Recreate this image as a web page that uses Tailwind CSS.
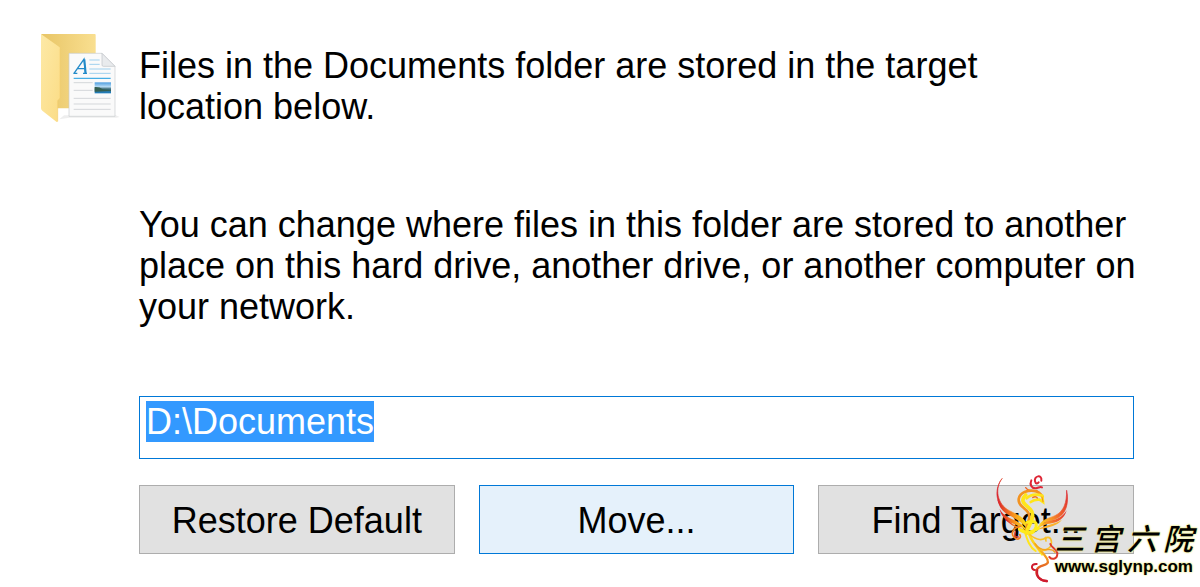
<!DOCTYPE html>
<html lang="en">

<head>
    <meta charset="UTF-8">
    <meta name="viewport" content="width=device-width, initial-scale=1.0">
    <script src="https://cdn.jsdelivr.net/npm/@tailwindcss/browser@4"></script>
    <title>Documents Properties</title>
</head>

<body class="relative min-h-screen bg-white font-['Liberation_Sans',Arial,sans-serif] text-4xl/[41px] text-black">
    <main class="flex items-start gap-4 pt-7 pr-[66px] pb-8 pl-9">
        <!-- Documents folder icon -->
        <svg class="w-[87px] h-[100px] shrink-0" viewBox="18 24 261 300" aria-hidden="true">
            <defs>
                <linearGradient id="folderFront" x1="0" x2="1" y1="0" y2="1">
                    <stop offset="0" stop-color="#fde9a6" />
                    <stop offset="1" stop-color="#fbdc85" />
                </linearGradient>
                <linearGradient id="folderBack" x1="0" x2="1">
                    <stop offset="0" stop-color="#e8c566" />
                    <stop offset="1" stop-color="#f9df90" />
                </linearGradient>
                <linearGradient id="photo" x1="0" x2="0" y1="0" y2="1">
                    <stop offset="0" stop-color="#4d9de0" />
                    <stop offset=".4" stop-color="#b7dcf5" />
                    <stop offset=".6" stop-color="#3e6d78" />
                    <stop offset="1" stop-color="#1c7fc4" />
                </linearGradient>
            </defs>
            <path d="M88 298l14-12h155l12 5-10 2H118z" fill="#eee" />
            <path d="M34 42h160q3 0 3 3v220H62L34 50z" fill="url(#folderBack)" />
            <path d="M34 43l53 37q3 2 3 6v148l-7 8v62q0 4-4 1l-42-33q-4-3-4-7V44z" fill="url(#folderFront)" />
            <path d="M90 86v148l-7 8v62" fill="none" stroke="#f4cf70" stroke-width="2" />
            <path d="M117 100h99l39 39v150H117z" fill="#fafafa" stroke="#c9cccf" stroke-width="2" />
            <path d="M216 100v35q0 4 4 4h35z" fill="#e9ebed" stroke="#bfc3c7" stroke-width="2" />
            <g fill="none">
                <path d="M132 160l30-43 4 43M142 146h22M130 160h12M159 160h12" stroke="#238bc9" stroke-width="4" />
                <path d="M163 118l4 42" stroke="#238bc9" stroke-width="6" />
                <path d="M178 120h31M178 133h31M178 147h64M178 160h64" stroke="#9fd0ee" stroke-width="3" />
                <path d="M131 175h111" stroke="#46aee5" stroke-width="4" />
                <path d="M131 188h57M131 211h57M131 235h111M131 252h111M131 268h111" stroke="#d4d7da" stroke-width="3" />
            </g>
            <path d="M194 187h49v33h-49z" fill="url(#photo)" />
            <path d="M194 201q15-1 24 7l25 2v2l-49 3z" fill="#345f51" />
        </svg>

        <div class="flex-1 pt-[17px]">
            <p class="max-w-[900px]">Files in the Documents folder are stored in the target location below.</p>
            <p class="mt-[77px] -mr-4">You can change where files in this folder are stored to another place on this hard drive, another drive, or another computer on your network.</p>

            <form class="mt-[69px]">
                <input id="target" type="text" aria-label="Target location" value="D:\Documents" autofocus
                    class="block w-full border border-[#0078d7] bg-white px-1.5 pt-1 pb-4 outline-none selection:bg-[#3399ff] selection:text-white" />
                <div class="mt-[26px] grid grid-cols-3 gap-6">
                    <button type="button" class="h-[69px] border border-[#adadad] bg-[#e1e1e1] pt-0.5 whitespace-nowrap">Restore Default</button>
                    <button type="button" class="h-[69px] border border-[#0078d7] bg-[#e5f1fb] pt-0.5 whitespace-nowrap">Move...</button>
                    <button type="button" class="h-[69px] border border-[#adadad] bg-[#e1e1e1] pt-0.5 whitespace-nowrap">Find Target...</button>
                </div>
            </form>
        </div>
    </main>

    <!-- Site watermark -->
    <div class="pointer-events-none absolute right-[7px] bottom-0 flex items-end">
        <svg class="-mr-[22px] h-[120px] w-[90px]" viewBox="0 0 270 360" fill="none" stroke-linecap="round" aria-hidden="true">
            <defs>
                <linearGradient id="flame" x1="0" x2="1">
                    <stop offset="0" stop-color="#d91f2c" />
                    <stop offset=".5" stop-color="#f58a1f" />
                    <stop offset="1" stop-color="#ffe81a" />
                </linearGradient>
                <linearGradient id="flameRight" x1="1" x2="0" y1="0" y2="1">
                    <stop offset="0" stop-color="#dc2430" />
                    <stop offset=".5" stop-color="#f16a2c" />
                    <stop offset="1" stop-color="#ffe81a" />
                </linearGradient>
                <linearGradient id="tail" x1="0" x2="0" y1="0" y2="1">
                    <stop offset="0" stop-color="#ffe91c" />
                    <stop offset=".5" stop-color="#f59a20" />
                    <stop offset="1" stop-color="#c9102a" />
                </linearGradient>
            </defs>
            <!-- left wing -->
            <path d="M45 35C22 63 30 112 67 131C91 144 111 149 121 178C104 154 84 148 65 138C22 115 22 62 45 35z" fill="url(#flame)" stroke="url(#flame)" stroke-width="2" />
            <path d="M31 97C43 119 62 133 91 147C108 156 116 166 121 185C104 164 87 157 72 148C49 137 35 121 31 97z" fill="url(#flame)" />
            <path d="M38 126C49 145 67 154 87 161C102 168 112 178 119 190C101 179 87 174 73 168C55 160 42 147 38 126z" fill="url(#flame)" />
            <path d="M57 158Q85 183 115 190" stroke="url(#flame)" stroke-width="4" />
            <!-- right wing -->
            <path d="M239 71C247 108 237 143 208 155C188 163 165 165 153 181C165 155 188 154 204 146C231 133 239 107 239 71z" fill="url(#flameRight)" stroke="url(#flameRight)" stroke-width="2" />
            <path d="M239 130C232 155 213 166 194 169C177 172 161 176 151 188C160 168 179 164 195 160C215 156 229 147 239 130z" fill="url(#flameRight)" />
            <path d="M225 158C211 176 191 180 151 188C174 173 201 173 225 158z" fill="#fbb02a" />
            <!-- crest -->
            <path d="M163 41C166 21 140 26 144 43C146 52 152 51 155 46M133 40C127 53 134 65 146 64C155 63 159 58 165 61" stroke="#de2535" stroke-width="6" />
            <path d="M116 62C122 71 136 75 150 70" stroke="#ef6327" stroke-width="4" />
            <!-- head and neck -->
            <path d="M166 89C154 67 128 69 113 75C92 84 89 105 106 119C119 130 132 139 125 159C122 174 114 187 119 199" stroke="#f39321" stroke-width="8" />
            <path d="M116 84C99 100 111 111 124 121C143 136 137 153 131 167L121 188" stroke="#ffe619" stroke-width="11" />
            <path d="M119 94Q137 77 166 86L168 105L158 98Q143 96 131 105" stroke="#ffe519" stroke-width="8" />
            <path d="M137 92q9-6 14 1" stroke="#ee7224" stroke-width="4" />
            <path d="M165 90l3 14" stroke="#f58b20" stroke-width="3" />
            <!-- body -->
            <path d="M120 166Q153 157 147 180Q139 204 120 198M97 187Q121 207 154 184" stroke="#ffeb19" stroke-width="9" />
            <path d="M101 178C78 181 69 202 83 212C94 222 105 211 98 203" stroke="#f4811f" stroke-width="5" />
            <path d="M85 194q-6 17 9 16" stroke="#df392c" stroke-width="4" />
            <path d="M114 196C121 220 128 241 146 252M122 194C137 226 149 243 165 263" stroke="#ffe51b" stroke-width="6" />
            <!-- tail -->
            <path d="M127 203C136 235 175 257 182 280C188 298 155 291 149 309C145 326 158 341 179 342" stroke="url(#tail)" stroke-width="7" />
            <path d="M149 291C130 290 132 309 144 309M151 309C147 329 160 342 180 343" stroke="#cf1c2e" stroke-width="6" />
            <path d="M128 203C151 222 169 220 177 211M158 248C173 254 197 244 193 222C190 206 172 209 177 222" stroke="#fac02a" stroke-width="5" />
            <path d="M190 231C193 242 209 246 211 258C212 276 196 280 187 270" stroke="#de3b2a" stroke-width="6" />
            <path d="M144 230Q157 251 183 248Q198 246 204 256" stroke="#f4a21c" stroke-width="4" />
        </svg>
        <div class="relative pb-3 text-center [text-shadow:0_0_2px_#ece77a,0_0_2px_#ece77a]">
            <div lang="zh" class="mb-1 flex justify-between font-['Noto_Sans_CJK_SC',sans-serif] text-[30px] leading-9 font-medium italic">
                <span>三</span><span>宫</span><span>六</span><span>院</span>
            </div>
            <div class="text-[17px] leading-4 font-bold">www.sglynp.com</div>
        </div>
    </div>

    <script>
        const target = document.getElementById("target");
        target.focus();
        target.select();
    </script>
</body>

</html>
